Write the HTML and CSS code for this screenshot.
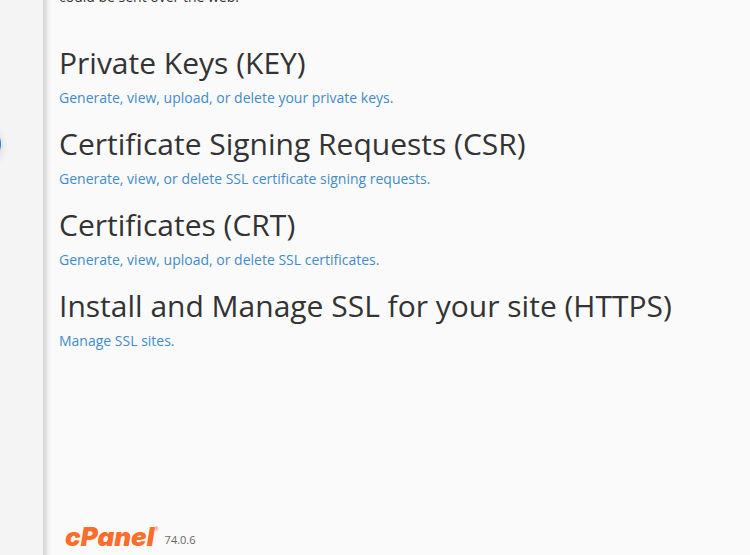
FILE: index.html
```html
<!DOCTYPE html>
<html lang="en">
<head>
    <meta charset="UTF-8">
    <meta name="viewport" content="width=device-width, initial-scale=1.0">
    <title>SSL/TLS</title>
    <link rel="stylesheet" href="styles.css">
</head>
<body>
    <div class="sidebar">
        <span class="marker"></span>
    </div>
    <div class="content">
        <main>
            <p class="intro">could be sent over the web.</p>

            <h2>Private Keys (KEY)</h2>
            <a href="#">Generate, view, upload, or delete your private keys.</a>

            <h2>Certificate Signing Requests (CSR)</h2>
            <a href="#">Generate, view, or delete SSL certificate signing requests.</a>

            <h2>Certificates (CRT)</h2>
            <a href="#">Generate, view, upload, or delete SSL certificates.</a>

            <h2>Install and Manage SSL for your site (HTTPS)</h2>
            <a href="#">Manage SSL sites.</a>
        </main>
        <footer>
            <span class="logo">cPanel</span><sup class="mark">®</sup>
            <span class="version">74.0.6</span>
        </footer>
    </div>
</body>
</html>
```

FILE: styles.css
```css
body {
    margin: 0;
    display: flex;
    height: 100vh;
    overflow: hidden;
    background-color: #fafafa;
    color: #333;
    font-family: "Open Sans", "Noto Sans", sans-serif;
    font-size: 14px;
    line-height: 20px;
}

.sidebar {
    position: relative;
    flex: 0 0 43px;
    background-color: #f4f4f4;
}

/* round button, mostly off the left edge */
.marker {
    position: absolute;
    top: 126px;
    left: -35px;
    width: 36px;
    height: 36px;
    border-radius: 50%;
    background-color: #0a84e8;
    box-shadow: 0 2px 8px rgba(0, 0, 0, 0.15);
}

.content {
    flex: 1;
    display: flex;
    flex-direction: column;
    justify-content: space-between;
    padding: 0 16px;
    background: linear-gradient(to right, #d6d6d6, #dedede 3px, #f2f2f2 5px, #fafafa 9px);
}

.intro {
    margin: -13px 0 39px;
}

h2 {
    margin: 19px 0 9px;
    font-size: 30px;
    font-weight: 400;
    line-height: 33px;
}

a {
    display: table;
    color: #428bca;
    text-decoration: none;
}

footer {
    display: flex;
    align-items: center;
    padding: 0 6px 4px;
}

.logo {
    color: #ff6c2c;
    font-family: Inter, "Open Sans", sans-serif;
    font-size: 26px;
    font-style: italic;
    font-weight: 900;
    line-height: 28px;
}

.mark {
    align-self: flex-start;
    color: #ff6c2c;
    font-size: 5px;
    line-height: 12px;
}

.version {
    margin-left: 6px;
    padding-top: 6px;
    color: #666;
    font-size: 11px;
}
```
